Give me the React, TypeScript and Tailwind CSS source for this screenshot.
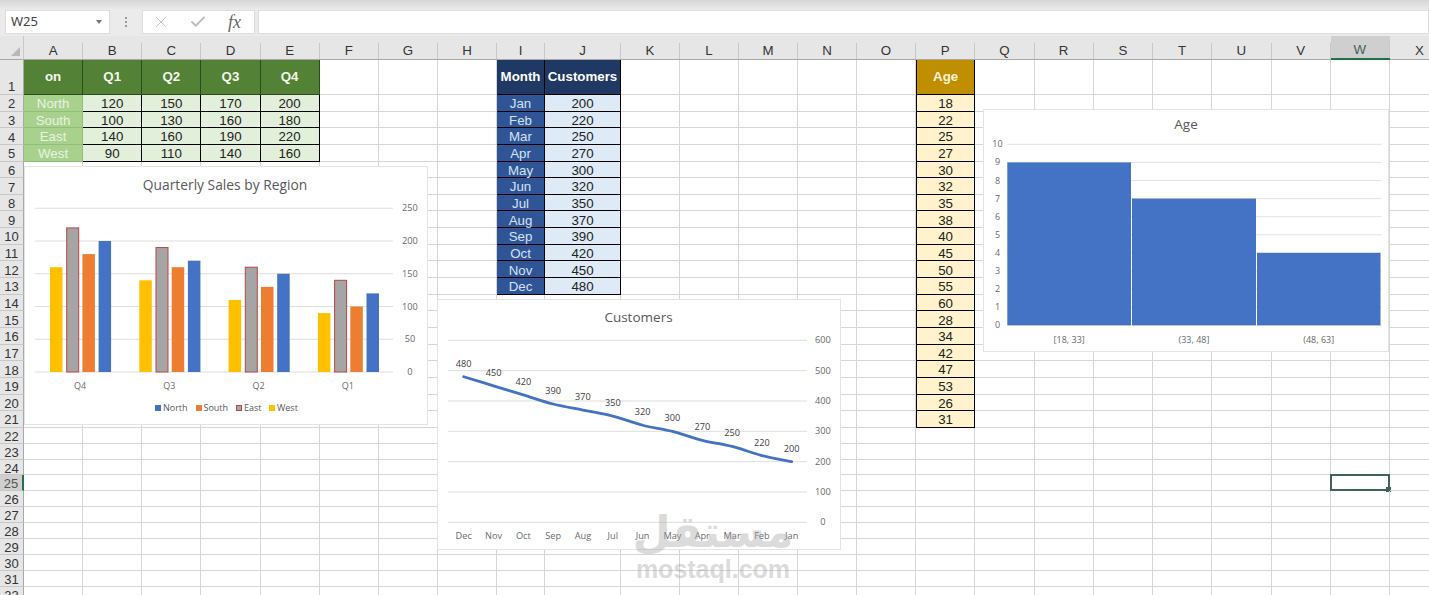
import { Check, X } from "lucide-react";

const COLS = "ABCDEFGHIJKLMNOPQRSTUVWX".split("");
const ROWS = Array.from({ length: 32 }, (_, i) => i + 1);

// cell contents per column, first entry sits in row 1
const DATA: Record<string, string[]> = {
  A: ["on", "North", "South", "East", "West"],
  B: ["Q1", "120", "100", "140", "90"],
  C: ["Q2", "150", "130", "160", "110"],
  D: ["Q3", "170", "160", "190", "140"],
  E: ["Q4", "200", "180", "220", "160"],
  I: ["Month", "Jan", "Feb", "Mar", "Apr", "May", "Jun", "Jul", "Aug", "Sep", "Oct", "Nov", "Dec"],
  J: ["Customers", "200", "220", "250", "270", "300", "320", "350", "370", "390", "420", "450", "480"],
  P: ["Age", "18", "22", "25", "27", "30", "32", "35", "38", "40", "45", "50", "55", "60", "28", "34", "42", "47", "53", "26", "31"],
};

function cellClass(col: string, row: number) {
  const filled = DATA[col] && row <= DATA[col].length;
  if (!filled) return "border-[#d6d6d6]";
  if (row === 1) {
    if (col === "I" || col === "J") return "bg-[#1f3864] border-black text-white font-bold";
    if (col === "P") return "bg-[#bf8f00] border-black border-l text-[#fdf3d8] font-bold";
    return "bg-[#538135] border-[#2c4a1a] text-[#f4f8f0] font-bold";
  }
  if (col === "A") return "bg-[#a9d18e] border-[#94bd79] text-[#e8f3e0] pt-[2px]";
  if (col === "I") return "bg-[#2f5597] border-black text-[#d6e2f3] pt-[2px]";
  if (col === "J") return "bg-[#deeaf6] border-black text-[#222] pt-[2px]";
  if (col === "P") return "bg-[#fff2cc] border-black border-l text-[#222] pt-[2px]";
  return "bg-[#e2efda] border-black text-[#222] pt-[2px]";
}

function ChartCard({ className, box, children }: { className: string; box: string; children: React.ReactNode }) {
  return (
    <div className={`absolute bg-white ring-1 ring-[#e4e4e4] ${className}`}>
      <svg viewBox={box} className="block h-full w-full font-['Open_Sans',sans-serif]" fill="#595959">
        {children}
      </svg>
    </div>
  );
}

function SalesChart() {
  const groups = [
    { label: "Q4", v: [160, 220, 180, 200] },
    { label: "Q3", v: [140, 190, 160, 170] },
    { label: "Q2", v: [110, 160, 130, 150] },
    { label: "Q1", v: [90, 140, 100, 120] },
  ];
  const colors = ["#ffc000", "#a5a5a5", "#ed7d31", "#4472c4"];
  const y = (v: number) => 372 - v * 0.655;
  return (
    <ChartCard className="left-[25px] top-[131px] h-[257px] w-[402px]" box="25 167 402 257">
      <text x="225" y="190" fontSize="13.8" textAnchor="middle">Quarterly Sales by Region</text>
      {[0, 50, 100, 150, 200, 250].map((v) => (
        <g key={v}>
          <line x1="35" x2="393" y1={y(v)} y2={y(v)} stroke="#dedede" />
          <text x="410" y={y(v) + 3} fontSize="9.2" textAnchor="middle" fill="#6a6a6a">{v}</text>
        </g>
      ))}
      {groups.map((g, i) => (
        <g key={g.label}>
          {g.v.map((v, j) => (
            <rect
              key={j}
              x={50 + i * 89.3 + j * 16.2 + (j === 1 ? 0.5 : 0)}
              y={y(v)}
              width={j === 1 ? 12 : 12.5}
              height={372 - y(v)}
              fill={colors[j]}
              stroke={j === 1 ? "#bb4444" : "none"}
            />
          ))}
          <text x={80 + i * 89.3} y="389" fontSize="9" textAnchor="middle" fill="#6a6a6a">{g.label}</text>
        </g>
      ))}
      <rect x="155" y="405" width="6" height="6" fill="#4472c4" />
      <text x="163" y="411" fontSize="9">North</text>
      <rect x="196" y="405" width="6" height="6" fill="#ed7d31" />
      <text x="203.5" y="411" fontSize="9">South</text>
      <rect x="236.5" y="405.5" width="5" height="5" fill="#a5a5a5" stroke="#bb4444" />
      <text x="244" y="411" fontSize="9">East</text>
      <rect x="269" y="405" width="6" height="6" fill="#ffc000" />
      <text x="277" y="411" fontSize="9">West</text>
    </ChartCard>
  );
}

function smoothPath(pts: number[][]) {
  let d = `M${pts[0][0]} ${pts[0][1]}`;
  for (let i = 0; i < pts.length - 1; i++) {
    const p0 = pts[Math.max(i - 1, 0)];
    const p1 = pts[i];
    const p2 = pts[i + 1];
    const p3 = pts[Math.min(i + 2, pts.length - 1)];
    d += ` C${p1[0] + (p2[0] - p0[0]) / 6} ${p1[1] + (p2[1] - p0[1]) / 6} ${p2[0] - (p3[0] - p1[0]) / 6} ${p2[1] - (p3[1] - p1[1]) / 6} ${p2[0]} ${p2[1]}`;
  }
  return d;
}

function CustomersChart() {
  const months = ["Dec", "Nov", "Oct", "Sep", "Aug", "Jul", "Jun", "May", "Apr", "Mar", "Feb", "Jan"];
  const values = [480, 450, 420, 390, 370, 350, 320, 300, 270, 250, 220, 200];
  const x = (i: number) => 463.7 + i * 29.82;
  const y = (v: number) => 522.3 - v * 0.3033;
  return (
    <ChartCard className="left-[438px] top-[264px] h-[249px] w-[402px]" box="438 300 402 249">
      <text x="638.5" y="321.5" fontSize="13.5" textAnchor="middle">Customers</text>
      {[0, 100, 200, 300, 400, 500, 600].map((v) => (
        <g key={v}>
          <line x1="448" x2="807" y1={y(v)} y2={y(v)} stroke="#dedede" />
          <text x="823" y={y(v) + 3} fontSize="9.2" textAnchor="middle" fill="#6a6a6a">{v}</text>
        </g>
      ))}
      <path d={smoothPath(values.map((v, i) => [x(i), y(v)]))} fill="none" stroke="#4472c4" strokeWidth="2.8" strokeLinecap="round" />
      {values.map((v, i) => (
        <text key={i} x={x(i)} y={y(v) - 10} fontSize="9.2" textAnchor="middle" fill="#404040">{v}</text>
      ))}
      {months.map((m, i) => (
        <text key={m} x={x(i)} y="538.5" fontSize="9.2" textAnchor="middle" fill="#6a6a6a">{m}</text>
      ))}
    </ChartCard>
  );
}

function AgeChart() {
  const bars = [
    { x: 1007.3, w: 123.7, v: 9, label: "[18, 33]" },
    { x: 1132, w: 124, v: 7, label: "(33, 48]" },
    { x: 1257, w: 123.5, v: 4, label: "(48, 63]" },
  ];
  const y = (v: number) => 325.3 - v * 18.1;
  return (
    <ChartCard className="left-[984px] top-[74px] h-[241px] w-[404px]" box="984 110 404 241">
      <text x="1186" y="129" fontSize="13.5" textAnchor="middle">Age</text>
      {[0, 1, 2, 3, 4, 5, 6, 7, 8, 9, 10].map((v) => (
        <g key={v}>
          <line x1="1007" x2="1381.5" y1={y(v)} y2={y(v)} stroke="#e2e2e2" />
          <text x="997.5" y={y(v) + 3} fontSize="9" textAnchor="middle" fill="#6a6a6a">{v}</text>
        </g>
      ))}
      {bars.map((b) => (
        <g key={b.label}>
          <rect x={b.x} y={y(b.v)} width={b.w} height={325.3 - y(b.v)} fill="#4472c4" />
          <text x={b.x + b.w / 2} y="342.5" fontSize="9" textAnchor="middle" fill="#6a6a6a">{b.label}</text>
        </g>
      ))}
    </ChartCard>
  );
}

function FormulaBar() {
  return (
    <div className="flex h-9 items-start bg-[#e8e8e8] bg-linear-to-b from-[#d6d6d6] to-[#ebebeb] to-[10px] pl-[5px] pt-[10px] font-['Noto_Sans',sans-serif]">
      <div className="flex h-6 w-[105px] items-center justify-between border border-[#dcdcdc] bg-white pl-[5px] pr-[7px] text-[13px] text-[#444]">
        W25
        <span className="h-0 w-0 border-x-[3px] border-t-[4px] border-x-transparent border-t-[#777]" />
      </div>
      <div className="flex h-6 w-[32px] flex-col items-center justify-center gap-[2px]">
        <span className="h-[2px] w-[2px] bg-[#999]" />
        <span className="h-[2px] w-[2px] bg-[#999]" />
        <span className="h-[2px] w-[2px] bg-[#999]" />
      </div>
      <div className="flex h-6 w-[113px] items-center border border-[#dcdcdc] bg-white text-[#bdbdbd]">
        <X className="ml-[9px] h-[18px] w-[18px]" strokeWidth={1.2} />
        <Check className="ml-[19px] h-[18px] w-[18px]" strokeWidth={2.4} />
        <span className="ml-[21px] font-['Liberation_Serif',serif] text-[18px] italic leading-none text-[#666]">fx</span>
      </div>
      <div className="ml-[3px] h-6 flex-1 border border-[#dcdcdc] bg-white" />
    </div>
  );
}

function Watermark() {
  return (
    <div className="pointer-events-none absolute left-[615px] top-[510px] flex w-[196px] flex-col items-center text-[#a8a8a8] opacity-40">
      <span className="font-['DejaVu_Sans',sans-serif] text-[44px] font-bold leading-[44px]" dir="rtl">مستقل</span>
      <span className="font-['Liberation_Sans',sans-serif] text-[25px] font-bold leading-[30px]">mostaql.com</span>
    </div>
  );
}

export default function App() {
  return (
    <div className="relative h-[595px] w-[1429px] overflow-hidden bg-white">
      <FormulaBar />
      <div className="relative h-[559px] overflow-hidden font-['Liberation_Sans',sans-serif]">
        <div className="grid grid-cols-[24px_repeat(8,59.125px)_48px_76px_repeat(5,59px)_repeat(8,59.25px)_60px] grid-rows-[24px_35px_repeat(20,16.65px)_repeat(11,15.9px)]">
          {/* corner */}
          <div className="relative border-b border-r border-b-[#a8a8a8] border-r-[#c8c8c8] bg-[#e6e6e6]">
            <span className="absolute bottom-[3px] right-[3px] h-0 w-0 border-b-[9px] border-l-[9px] border-b-[#b8b8b8] border-l-transparent" />
          </div>
          {COLS.map((c) => (
            <div key={c} className={`flex items-end ${c === "W" ? "border-b-2 border-b-[#217346] bg-[#cfcfcf]" : "border-b border-b-[#a8a8a8] bg-[#e6e6e6]"}`}>
              <div className={`flex h-[16px] w-full items-center justify-center border-r border-r-[#c8c8c8] text-[13.3px] leading-none ${c === "W" ? "text-[#3f6554]" : "text-[#333]"}`}>
                {c}
              </div>
            </div>
          ))}
          {ROWS.map((r) => (
            <div key={r} className="contents">
              <div
                className={`flex justify-center border-b text-[13px] leading-none ${r === 1 ? "items-end pb-px" : "items-center pt-[2px]"} ${
                  r === 25 ? "border-b-[#c8c8c8] border-r-2 border-r-[#217346] bg-[#cfcfcf] text-[#555]" : "border-r border-b-[#c8c8c8] border-r-[#a8a8a8] bg-[#e6e6e6] text-[#333]"
                }`}
              >
                {r}
              </div>
              {COLS.map((c) => (
                <div
                  key={c}
                  className={`relative flex items-center justify-center border-b border-r text-[13.3px] leading-none ${cellClass(c, r)}`}
                >
                  {DATA[c]?.[r - 1]}
                  {c === "W" && r === 25 && (
                    <div className="absolute -inset-px border-2 border-[#3f6554]">
                      <span className="absolute -bottom-[3px] -right-[3px] h-[5px] w-[5px] bg-[#3f6554]" />
                    </div>
                  )}
                </div>
              ))}
            </div>
          ))}
        </div>
        <SalesChart />
        <CustomersChart />
        <AgeChart />
      </div>
      <Watermark />
    </div>
  );
}
